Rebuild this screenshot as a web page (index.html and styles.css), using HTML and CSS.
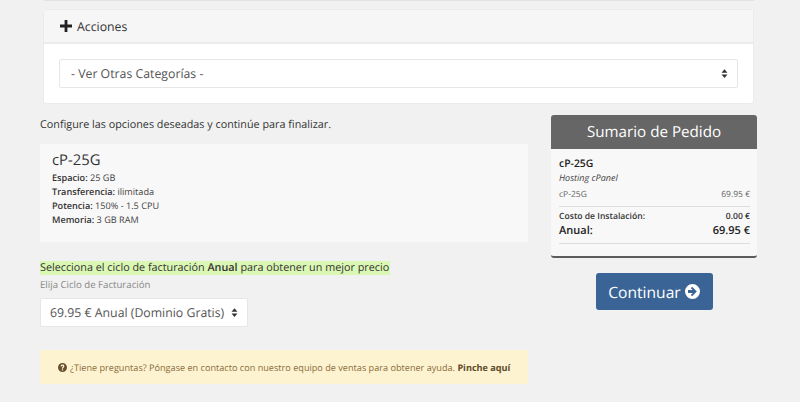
FILE: index.html
```html
<!DOCTYPE html>
<html lang="es">
<head>
<meta charset="utf-8">
<title>Sumario de Pedido</title>
<link rel="stylesheet" href="styles.css">
</head>
<body>
<div class="prev-edge"></div>
<section class="panel">
  <header class="panel-head">
    <svg class="plus" viewBox="0 0 12 12" aria-hidden="true"><path d="M4.6 0h2.8v4.6H12v2.8H7.4V12H4.6V7.4H0V4.6h4.6z"/></svg>
    <span>Acciones</span>
  </header>
  <div class="panel-body">
    <div class="select wide">
      <span>- Ver Otras Categorías -</span>
      <svg class="updown" viewBox="0 0 8 10" aria-hidden="true"><path d="M4 0l3.4 4H.6zM4 10L.6 6h6.8z"/></svg>
    </div>
  </div>
</section>
<main class="columns">
  <div class="left">
    <p class="intro">Configure las opciones deseadas y continúe para finalizar.</p>
    <div class="product">
      <h2>cP-25G</h2>
      <div><b>Espacio:</b> 25 GB</div>
      <div><b>Transferencia:</b> ilimitada</div>
      <div><b>Potencia:</b> 150% - 1.5 CPU</div>
      <div><b>Memoria:</b> 3 GB RAM</div>
    </div>
    <p class="promo">Selecciona el ciclo de facturación <b>Anual</b> para obtener un mejor precio</p>
    <p class="cycle-label">Elija Ciclo de Facturación</p>
    <div class="select cycle">
      <span>69.95 € Anual (Dominio Gratis)</span>
      <svg class="updown" viewBox="0 0 8 10" aria-hidden="true"><path d="M4 0l3.4 4H.6zM4 10L.6 6h6.8z"/></svg>
    </div>
    <div class="alert">
      <svg class="qmark" viewBox="0 0 16 16" aria-hidden="true"><path fill-rule="evenodd" d="M8 0a8 8 0 1 1 0 16A8 8 0 0 1 8 0zM6.9 11.2v2.2h2.2v-2.2zM8 2.8c-1.9 0-3.2 1-3.5 2.8l2.1.5c.2-.9.6-1.3 1.3-1.3.7 0 1.1.4 1.1 1 0 .5-.3.8-.9 1.3-.9.7-1.2 1.3-1.2 2.3v.6h2.1v-.4c0-.5.2-.8.8-1.3 1-.8 1.5-1.5 1.5-2.6 0-1.7-1.3-2.9-3.3-2.9z"/></svg>
      <span>¿Tiene preguntas? Póngase en contacto con nuestro equipo de ventas para obtener ayuda. <b>Pinche aquí</b></span>
    </div>
  </div>
  <aside class="right">
    <div class="summary">
      <h3>Sumario de Pedido</h3>
      <div class="summary-body">
        <div class="sum-name">cP-25G</div>
        <div class="sum-group">Hosting cPanel</div>
        <div class="sum-row item"><span>cP-25G</span><span>69.95 €</span></div>
        <div class="sum-row setup"><span>Costo de Instalación:</span><span>0.00 €</span></div>
        <div class="sum-row total"><span>Anual:</span><span>69.95 €</span></div>
      </div>
    </div>
    <a class="btn" href="#">Continuar
      <svg class="arrow" viewBox="0 0 16 16" aria-hidden="true"><path fill-rule="evenodd" d="M8 0a8 8 0 1 1 0 16A8 8 0 0 1 8 0zM7.6 3L6.2 4.4 8.3 6.5H3.2v3h5.1l-2.1 2.1L7.6 13l5-5z"/></svg>
    </a>
  </aside>
</main>
</body>
</html>
```
FILE: styles.css
```css
* { box-sizing: border-box; }
html, body { margin: 0; height: 402px; overflow: hidden; }
body {
  background: #f1f1f1;
  color: #333;
  font-family: "Open Sans", "Liberation Sans", sans-serif;
  text-rendering: geometricPrecision;
  padding-left: 40px;
  width: 800px;
}
p, h2, h3 { margin: 0; font-weight: 400; }
.prev-edge {
  height: 1px;
  margin: 0 46px 0 4px;
  background: #e2e2e2;
}
.panel {
  margin: 8px 46px 0 3px;
  height: 95px;
  background: #fff;
  border: 1px solid #ebebeb;
  border-radius: 3px;
}
.panel-head {
  height: 34px;
  display: flex;
  align-items: center;
  gap: 5px;
  padding-left: 16px;
  background: #f6f6f6;
  border-bottom: 2px solid #ebebeb;
  font-size: 12.3px;
  color: #333;
}
.plus { width: 12px; height: 12px; fill: #222; }
.panel-body { padding: 15px 15px 0; }
.select {
  display: flex;
  align-items: center;
  justify-content: space-between;
  background: #fff;
  border: 1px solid #e6e6e6;
  border-radius: 2px;
  color: #555;
  white-space: nowrap;
}
.select.wide { height: 29px; padding: 0 9px 0 11px; font-size: 12.3px; }
.updown { width: 7px; height: 9px; fill: #333; flex: none; }
.columns { display: flex; margin-top: 11px; width: 717px; justify-content: space-between; }
.left { width: 488px; }
.intro { font-size: 10.8px; line-height: 17px; padding-top: 1px; height: 18px; color: #333; }
.product {
  margin-top: 11px;
  height: 98px;
  padding: 7px 12px;
  background: #f8f8f8;
  font-size: 9.15px;
  line-height: 14px;
  color: #444;
}
.product b { font-weight: 600; color: #333; }
.product h2 { font-size: 14.8px; line-height: 19px; margin-bottom: 1px; color: #333; }
.promo {
  margin-top: 19px;
  width: 350px;
  height: 14px;
  line-height: 14px;
  font-size: 10.8px;
  background: #dbf7b4;
  color: #333;
  white-space: nowrap;
}
.promo b { font-weight: 600; }
.cycle-label { margin-top: 2px; font-size: 9.65px; line-height: 15px; color: #888; }
.select.cycle {
  margin-top: 6px;
  width: 208px;
  height: 29px;
  padding: 0 9px;
  font-size: 12.3px;
}
.alert {
  margin-top: 23px;
  height: 34px;
  display: flex;
  align-items: center;
  gap: 3px;
  padding-left: 18px;
  background: #fdf3d1;
  color: #8a6d3b;
  font-size: 9.15px;
  white-space: nowrap;
}
.alert b { font-weight: 700; color: #5c4a28; }
.qmark { width: 9px; height: 9px; fill: #66512c; flex: none; }
.right { width: 206px; display: flex; flex-direction: column; align-items: center; }
.summary {
  width: 206px;
  height: 143px;
  background: #f8f8f8;
  border-bottom: 2px solid #5c5c5c;
  border-radius: 3px;
  overflow: hidden;
}
.summary h3 {
  height: 34px;
  background: #666;
  color: #fff;
  font-size: 15.2px;
  line-height: 34px;
  text-align: center;
}
.summary-body { padding: 8px 7px 0 8px; }
.sum-name { font-size: 10.4px; font-weight: 600; line-height: 14px; color: #222; }
.sum-group { font-size: 9px; font-style: italic; line-height: 14px; color: #444; }
.sum-row { display: flex; justify-content: space-between; }
.sum-row.item {
  margin-top: 3px;
  padding-bottom: 4px;
  font-size: 8.5px;
  line-height: 14px;
  color: #666;
  border-bottom: 1px solid #ddd;
}
.sum-row.setup { margin-top: 2px; font-size: 8.6px; line-height: 14px; font-weight: 600; color: #333; }
.sum-row.total {
  font-size: 11px;
  line-height: 16px;
  font-weight: 600;
  color: #222;
  padding-bottom: 4px;
  border-bottom: 1px solid #ddd;
}
.btn {
  margin-top: 15px;
  width: 117px;
  height: 37px;
  display: flex;
  align-items: center;
  justify-content: center;
  gap: 4px;
  background: #3a6496;
  color: #fff;
  font-size: 15.6px;
  border-radius: 3px;
  text-decoration: none;
}
.arrow { width: 15px; height: 15px; fill: #fff; }
```
